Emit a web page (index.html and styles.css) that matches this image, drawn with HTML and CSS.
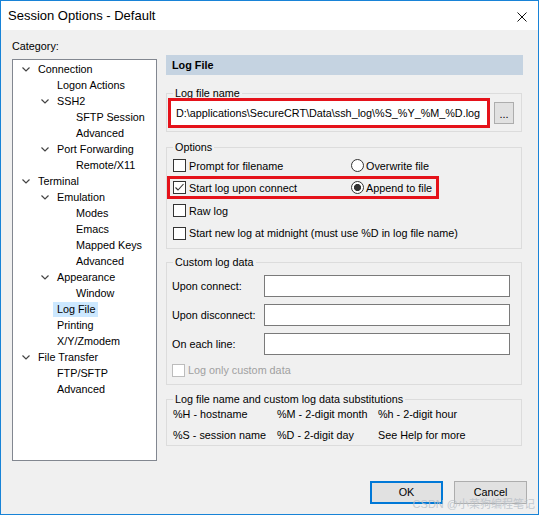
FILE: index.html
```html
<!DOCTYPE html>
<html>
<head>
<meta charset="utf-8">
<title>Session Options - Default</title>
<link rel="stylesheet" href="styles.css">
</head>
<body>
<div class="window">
  <div class="titlebar">
    <span class="title">Session Options - Default</span>
    <svg class="close" width="10" height="10" viewBox="0 0 10 10"><path d="M0.5 0.5L9.5 9.5M9.5 0.5L0.5 9.5" stroke="#111" stroke-width="1" fill="none"/></svg>
  </div>
  <div class="body">
    <div class="main">
      <div class="left">
        <div class="cat-label">Category:</div>
        <div class="tree">
          <div class="node l1"><span class="tw"><svg width="8" height="5" viewBox="0 0 8 5"><path d="M0.5 0.5L4 4L7.5 0.5" fill="none" stroke="#444" stroke-width="1.2"/></svg></span><span class="txt">Connection</span></div>
          <div class="node l2"><span class="tw"></span><span class="txt">Logon Actions</span></div>
          <div class="node l2"><span class="tw"><svg width="8" height="5" viewBox="0 0 8 5"><path d="M0.5 0.5L4 4L7.5 0.5" fill="none" stroke="#444" stroke-width="1.2"/></svg></span><span class="txt">SSH2</span></div>
          <div class="node l3"><span class="tw"></span><span class="txt">SFTP Session</span></div>
          <div class="node l3"><span class="tw"></span><span class="txt">Advanced</span></div>
          <div class="node l2"><span class="tw"><svg width="8" height="5" viewBox="0 0 8 5"><path d="M0.5 0.5L4 4L7.5 0.5" fill="none" stroke="#444" stroke-width="1.2"/></svg></span><span class="txt">Port Forwarding</span></div>
          <div class="node l3"><span class="tw"></span><span class="txt">Remote/X11</span></div>
          <div class="node l1"><span class="tw"><svg width="8" height="5" viewBox="0 0 8 5"><path d="M0.5 0.5L4 4L7.5 0.5" fill="none" stroke="#444" stroke-width="1.2"/></svg></span><span class="txt">Terminal</span></div>
          <div class="node l2"><span class="tw"><svg width="8" height="5" viewBox="0 0 8 5"><path d="M0.5 0.5L4 4L7.5 0.5" fill="none" stroke="#444" stroke-width="1.2"/></svg></span><span class="txt">Emulation</span></div>
          <div class="node l3"><span class="tw"></span><span class="txt">Modes</span></div>
          <div class="node l3"><span class="tw"></span><span class="txt">Emacs</span></div>
          <div class="node l3"><span class="tw"></span><span class="txt">Mapped Keys</span></div>
          <div class="node l3"><span class="tw"></span><span class="txt">Advanced</span></div>
          <div class="node l2"><span class="tw"><svg width="8" height="5" viewBox="0 0 8 5"><path d="M0.5 0.5L4 4L7.5 0.5" fill="none" stroke="#444" stroke-width="1.2"/></svg></span><span class="txt">Appearance</span></div>
          <div class="node l3"><span class="tw"></span><span class="txt">Window</span></div>
          <div class="node l2"><span class="tw"></span><span class="txt sel">Log File</span></div>
          <div class="node l2"><span class="tw"></span><span class="txt">Printing</span></div>
          <div class="node l2"><span class="tw"></span><span class="txt">X/Y/Zmodem</span></div>
          <div class="node l1"><span class="tw"><svg width="8" height="5" viewBox="0 0 8 5"><path d="M0.5 0.5L4 4L7.5 0.5" fill="none" stroke="#444" stroke-width="1.2"/></svg></span><span class="txt">File Transfer</span></div>
          <div class="node l2"><span class="tw"></span><span class="txt">FTP/SFTP</span></div>
          <div class="node l2"><span class="tw"></span><span class="txt">Advanced</span></div>
        </div>
      </div>
      <div class="right">
        <div class="header">Log File</div>

        <fieldset class="grp grp-name">
          <legend>Log file name</legend>
          <div class="name-row">
            <div class="hl-box name-box"><div class="path">D:\applications\SecureCRT\Data\ssh_log\%S_%Y_%M_%D.log</div></div>
            <div class="dots">...</div>
          </div>
        </fieldset>

        <fieldset class="grp grp-opts">
          <legend>Options</legend>
          <div class="opts">
            <div class="orow r1"><div class="col1"><span class="cb"></span><span>Prompt for filename</span></div><div class="col2"><span class="rb"></span><span>Overwrite file</span></div></div>
            <div class="orow r2 hl-row"><div class="col1"><span class="cb"><svg width="11" height="11" viewBox="0 0 11 11"><path d="M1.5 5.5L4 8L9.5 2" fill="none" stroke="#333" stroke-width="1.1"/></svg></span><span>Start log upon connect</span></div><div class="col2"><span class="rb on"></span><span>Append to file</span></div></div>
            <div class="orow r3"><div class="col1"><span class="cb"></span><span>Raw log</span></div></div>
            <div class="orow r4"><span class="cb"></span><span>Start new log at midnight (must use %D in log file name)</span></div>
          </div>
        </fieldset>

        <fieldset class="grp grp-custom">
          <legend>Custom log data</legend>
          <div class="custom">
            <div class="crow"><span class="clabel">Upon connect:</span><span class="field"></span></div>
            <div class="crow"><span class="clabel">Upon disconnect:</span><span class="field"></span></div>
            <div class="crow"><span class="clabel">On each line:</span><span class="field"></span></div>
            <div class="orow disabled"><span class="cb"></span><span>Log only custom data</span></div>
          </div>
        </fieldset>

        <fieldset class="grp grp-subs">
          <legend>Log file name and custom log data substitutions</legend>
          <div class="subs">
            <span>%H - hostname</span><span>%M - 2-digit month</span><span>%h - 2-digit hour</span>
            <span>%S - session name</span><span>%D - 2-digit day</span><span>See Help for more</span>
          </div>
        </fieldset>
      </div>
    </div>
    <div class="buttons">
      <div class="btn default">OK</div>
      <div class="btn">Cancel</div>
    </div>
  </div>
  <div class="watermark">CSDN @小菜狗编程笔记</div>
</div>
</body>
</html>
```

FILE: styles.css
```css
* { box-sizing: border-box; }
html, body { margin: 0; padding: 0; }
body {
  font-family: "Liberation Sans", Arial, sans-serif;
  font-size: 10.8px;
  color: #000;
  background: #f0f0f0;
}
.window {
  position: relative;
  width: 539px;
  height: 515px;
  border: 1px solid #1883d7;
  background: #f0f0f0;
  overflow: hidden;
}
.titlebar {
  height: 29px;
  background: #fff;
  display: flex;
  align-items: center;
  justify-content: space-between;
  padding: 0 11px 0 7px;
}
.title { font-size: 13px; line-height: 16px; }
.close { display: block; margin-top: 2px; }

.body { padding: 0 0 0 11px; }
.main { display: flex; gap: 9px; height: 431px; }
.left { width: 145px; padding-top: 8px; }
.cat-label { line-height: 16px; height: 16px; }
.tree {
  margin-top: 5px;
  height: 402px;
  background: #fff;
  border: 1px solid #828790;
  padding-top: 1px;
}
.node { display: flex; align-items: center; height: 16px; line-height: 16px; white-space: nowrap; }
.node.l1 { padding-left: 9px; }
.node.l2 { padding-left: 28px; }
.node.l3 { padding-left: 47px; }
.tw { width: 16px; flex: none; display: flex; align-items: center; }
.tw svg { display: block; margin-top: 1px; }
.txt.sel {
  background: #cce8ff;
  margin-left: -4px;
  padding: 0 3px 0 4px;
  line-height: 15px;
  height: 15px;
  margin-top: 1px;
}

.right { width: 357px; margin-top: 25px; }
.header {
  height: 20px;
  line-height: 20px;
  background: #c5d3e1;
  font-weight: bold;
  padding-left: 6px;
}
.grp {
  margin: 0;
  padding: 0;
  width: 356px;
  border: 1px solid #dcdcdc;
  min-inline-size: 0;
}
.grp legend {
  margin-left: 6px;
  padding: 0 2px;
  line-height: 16px;
  height: 16px;
}
.grp-name { margin-top: 10px; }
.name-row {
  display: flex;
  align-items: center;
  margin-top: -3px;
  padding: 0 0 3px 1px;
}
.hl-box { border: 3px solid #e5121a; }
.name-box {
  width: 322px;
  height: 30px;
  background: #fff;
  display: flex;
  align-items: center;
  padding-left: 5px;
}
.path { white-space: nowrap; line-height: 16px; }
.dots {
  margin-left: 4px;
  width: 20px;
  height: 22px;
  background: #e1e1e1;
  border: 1px solid #adadad;
  text-align: center;
  line-height: 22px;
  font-size: 11px;
}

.grp-opts { margin-top: 7px; }
.opts { padding: 0 0 4px 0; }
.orow { display: flex; align-items: center; height: 22px; padding-left: 6px; white-space: nowrap; }
.orow.r1 { height: 21px; }
.orow.r2 { height: 23px; }
.orow.r3 { height: 23px; }
.hl-row { width: 272px; padding-left: 3px; border: 3px solid #e5121a; }
.col1 { width: 178px; display: flex; align-items: center; }
.col2 { display: flex; align-items: center; }
.cb {
  width: 13px;
  height: 13px;
  flex: none;
  border: 1px solid #333;
  background: #fff;
  margin-right: 3px;
  display: flex;
  align-items: center;
  justify-content: center;
}
.cb svg { display: block; }
.rb {
  width: 13px;
  height: 13px;
  flex: none;
  border: 1px solid #333;
  border-radius: 50%;
  background: #fff;
  margin-right: 2px;
}
.rb.on { background: radial-gradient(circle, #333 0, #333 3.2px, #fff 3.9px); }

.grp-custom { margin-top: 5px; }
.custom { padding: 5px 0 3px 5px; display: flex; flex-direction: column; gap: 7px; }
.crow { display: flex; align-items: center; height: 22px; }
.clabel { width: 92px; flex: none; white-space: nowrap; }
.field { width: 246px; height: 22px; background: #fff; border: 1px solid #7a7a7a; }
.custom .orow { padding-left: 0; margin-left: 0; margin-top: -3px; }
.orow.disabled { color: #a0a0a0; }
.orow.disabled .cb { border-color: #bcbcbc; }

.grp-subs { margin-top: 6px; }
.subs {
  margin-top: -4px;
  padding-left: 6px;
  display: grid;
  grid-template-columns: 104px 101px auto;
  grid-auto-rows: 21px;
  align-items: center;
  white-space: nowrap;
}

.buttons {
  margin-top: 20px;
  display: flex;
  justify-content: flex-end;
  gap: 11px;
  padding-right: 11px;
}
.btn {
  width: 73px;
  height: 23px;
  background: #e1e1e1;
  border: 1px solid #adadad;
  text-align: center;
  line-height: 21px;
}
.btn.default { border: 2px solid #0078d7; line-height: 19px; }

.watermark {
  position: absolute;
  right: 3px;
  bottom: 3px;
  font-family: "Liberation Sans", "Noto Sans CJK SC", sans-serif;
  font-size: 11px;
  color: rgba(185, 192, 200, 0.85);
  white-space: nowrap;
}
```
